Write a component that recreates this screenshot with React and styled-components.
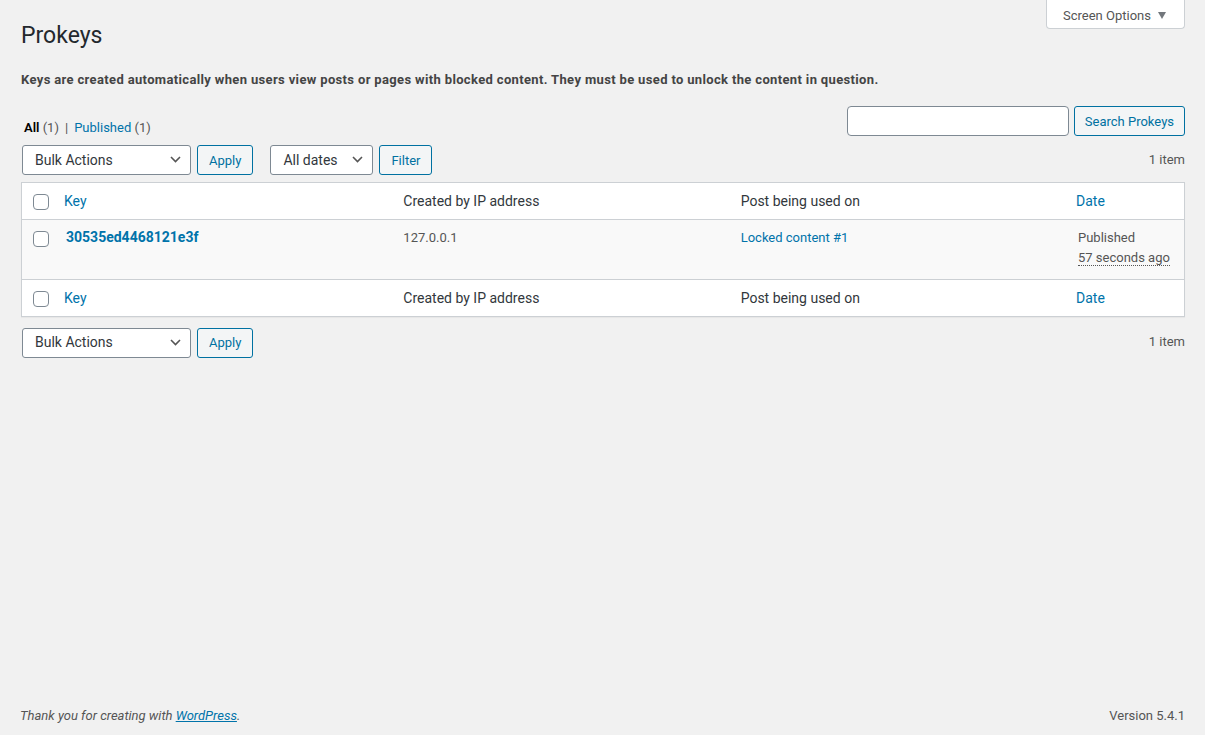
import React from "react";
import styled, { createGlobalStyle } from "styled-components";

const FONT = `Roboto, "Noto Sans", "Liberation Sans", sans-serif`;
const BLUE = "#0073aa";
const BORDER = "#ccd0d4";

const GlobalStyle = createGlobalStyle`
  html, body { margin: 0; padding: 0; }
  body {
    background: #f1f1f1;
    color: #444;
    font-family: ${FONT};
    font-size: 13px;
    line-height: 1.4em;
  }
  * { box-sizing: border-box; }
`;

const Page = styled.div`
  min-height: 100vh;
  display: flex;
  flex-direction: column;
`;

const Wrap = styled.main`
  padding: 0 20px 0 21px;
`;

const Header = styled.div`
  display: flex;
  justify-content: space-between;
  align-items: flex-start;
`;

const Title = styled.h1`
  margin: 0;
  padding-top: 21px;
  font-size: 23px;
  font-weight: 400;
  line-height: 1.3;
  color: #23282d;
`;

const ScreenTab = styled.button`
  display: flex;
  align-items: center;
  gap: 7px;
  height: 30px;
  margin-top: -1px;
  padding: 3px 0 0 16px;
  width: 139px;
  background: #fff;
  border: 1px solid ${BORDER};
  border-top: none;
  border-radius: 0 0 4px 4px;
  font-family: ${FONT};
  font-size: 13px;
  color: #555;
  cursor: pointer;
`;

const Caret = styled.span`
  width: 0;
  height: 0;
  border-left: 4px solid transparent;
  border-right: 4px solid transparent;
  border-top: 7px solid #72777c;
`;

const Intro = styled.p`
  margin: 19px 0 0;
  font-weight: 700;
  font-size: 13px;
  line-height: 1.5;
  letter-spacing: 0.35px;
  color: #444;
`;

const FilterRow = styled.div`
  display: flex;
  justify-content: space-between;
  align-items: flex-end;
  margin-top: 17px;
`;

const Views = styled.ul`
  display: flex;
  list-style: none;
  margin: 0 0 -5px 3px;
  padding: 0;
  font-size: 13px;
  line-height: 2;
  color: #666;
`;

const ViewItem = styled.li`
  color: ${(p) => (p.$current ? "#000" : BLUE)};
  font-weight: ${(p) => (p.$current ? 600 : 400)};
`;

const Count = styled.span`
  color: #555;
  font-weight: 400;
`;

const Sep = styled.span`
  color: #555;
  padding: 0 6px;
`;

const SearchBox = styled.div`
  display: flex;
  gap: 5px;
`;

const SearchInput = styled.input`
  width: 222px;
  height: 30px;
  border: 1px solid #7e8993;
  border-radius: 4px;
  background: #fff;
  font-family: ${FONT};
  font-size: 14px;
  padding: 0 8px;
`;

const Button = styled.button`
  height: 30px;
  padding: 0 ${(p) => p.$pad ?? 10}px;
  background: #f3f5f6;
  border: 1px solid #0071a1;
  border-radius: 3px;
  color: #0071a1;
  font-family: ${FONT};
  font-size: 13px;
  line-height: 1;
  white-space: nowrap;
  cursor: pointer;
`;

const Tablenav = styled.div`
  display: flex;
  align-items: center;
  margin: ${(p) => (p.$bottom ? "11px 0 0" : "9px 0 7px")};
  padding-left: 1px;
`;

const Group = styled.div`
  display: flex;
  gap: 6px;
  margin-right: 17px;
`;

const Select = styled.div`
  position: relative;
  display: flex;
  align-items: center;
  width: ${(p) => p.$w}px;
  height: 30px;
  padding: 0 24px 0 12px;
  background: #fff;
  border: 1px solid #7e8993;
  border-radius: 3px;
  color: #32373c;
  font-size: 14px;
`;

const Chevron = styled.svg`
  position: absolute;
  right: 9px;
  top: 50%;
  margin-top: -4px;
`;

const ItemCount = styled.span`
  margin-left: auto;
  color: #555;
  font-size: 13px;
`;

const Table = styled.div`
  background: #fff;
  border: 1px solid ${BORDER};
  box-shadow: 0 1px 1px rgba(0, 0, 0, 0.04);
`;

const Row = styled.div`
  display: grid;
  grid-template-columns: 34px 1fr 1fr 1fr 116px;
  min-height: ${(p) => (p.$body ? 60 : 35)}px;
  background: ${(p) => (p.$body ? "#f9f9f9" : "#fff")};
  border-top: ${(p) => (p.$first ? "none" : `1px solid ${BORDER}`)};
`;

const CheckCell = styled.div`
  padding: 11px 0 0 11px;
`;

const Checkbox = styled.span`
  display: block;
  width: 16px;
  height: 16px;
  border: 1px solid #7e8993;
  border-radius: 4px;
  background: #fff;
`;

const HeadCell = styled.div`
  padding: 9px 10px 7px ${(p) => (p.$sortable ? 8 : 10)}px;
  font-size: 14px;
  line-height: 1.4em;
  color: ${(p) => (p.$sortable ? BLUE : "#32373c")};
`;

const Cell = styled.div`
  padding: 8px 10px;
  font-size: 13px;
  line-height: 1.5em;
  color: ${(p) => (p.$link ? BLUE : "#555")};
`;

const RowTitle = styled.div`
  padding: 8px 10px;
  font-size: 14px;
  font-weight: 700;
  line-height: 1.4em;
  color: ${BLUE};
`;

const DateLine = styled.div`
  padding-top: 1px;
`;

const Abbr = styled.abbr`
  text-decoration: none;
  border-bottom: 1px dotted #555;
`;

const Footer = styled.footer`
  margin-top: auto;
  display: flex;
  justify-content: space-between;
  padding: 0 20px 10px;
  font-size: 13px;
  color: #555;
`;

const Thanks = styled.span`
  font-style: italic;
`;

const FooterLink = styled.a`
  color: ${BLUE};
  text-decoration: underline;
`;

const ChevronIcon = () => (
  <Chevron width="11" height="7" viewBox="0 0 11 7">
    <path d="M1 1l4.5 4.5L10 1" fill="none" stroke="#555" strokeWidth="1.6" />
  </Chevron>
);

const HeadRow = ({ first }) => (
  <Row $first={first}>
    <CheckCell><Checkbox /></CheckCell>
    <HeadCell $sortable>Key</HeadCell>
    <HeadCell>Created by IP address</HeadCell>
    <HeadCell>Post being used on</HeadCell>
    <HeadCell $sortable>Date</HeadCell>
  </Row>
);

const BulkNav = ({ bottom }) => (
  <Tablenav $bottom={bottom}>
    <Group>
      <Select $w={169}>Bulk Actions<ChevronIcon /></Select>
      <Button $pad={11}>Apply</Button>
    </Group>
    {!bottom && (
      <Group>
        <Select $w={103}>All dates<ChevronIcon /></Select>
        <Button $pad={11}>Filter</Button>
      </Group>
    )}
    <ItemCount>1 item</ItemCount>
  </Tablenav>
);

export default function App() {
  return (
    <Page>
      <GlobalStyle />
      <Wrap>
        <Header>
          <Title>Prokeys</Title>
          <ScreenTab>Screen Options <Caret /></ScreenTab>
        </Header>
        <Intro>
          Keys are created automatically when users view posts or pages with blocked content. They must be used to unlock the content in question.
        </Intro>
        <FilterRow>
          <Views>
            <ViewItem $current>All <Count>(1)</Count></ViewItem>
            <Sep>|</Sep>
            <ViewItem>Published <Count>(1)</Count></ViewItem>
          </Views>
          <SearchBox>
            <SearchInput type="search" />
            <Button>Search Prokeys</Button>
          </SearchBox>
        </FilterRow>
        <BulkNav />
        <Table>
          <HeadRow first />
          <Row $body>
            <CheckCell><Checkbox /></CheckCell>
            <RowTitle>30535ed4468121e3f</RowTitle>
            <Cell>127.0.0.1</Cell>
            <Cell $link>Locked content #1</Cell>
            <Cell>
              Published
              <DateLine><Abbr title="2020/05/01">57 seconds ago</Abbr></DateLine>
            </Cell>
          </Row>
          <HeadRow />
        </Table>
        <BulkNav bottom />
      </Wrap>
      <Footer>
        <Thanks>Thank you for creating with <FooterLink href="#">WordPress</FooterLink>.</Thanks>
        <span>Version 5.4.1</span>
      </Footer>
    </Page>
  );
}
